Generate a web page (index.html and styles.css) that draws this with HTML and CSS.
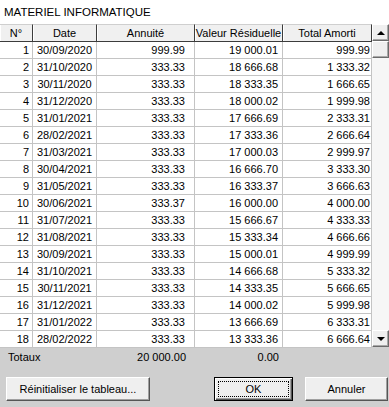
FILE: index.html
```html
<!DOCTYPE html>
<html lang="fr">
<head>
    <meta charset="UTF-8">
    <title>Matériel informatique</title>
    <link rel="stylesheet" href="styles.css">
</head>
<body>
    <div class="title">MATERIEL INFORMATIQUE</div>

    <div class="grid-wrap">
        <table class="grid">
            <thead>
                <tr>
                    <th class="c-no">N°</th>
                    <th class="c-date">Date</th>
                    <th class="c-ann">Annuité</th>
                    <th class="c-val">Valeur Résiduelle</th>
                    <th class="c-tot">Total Amorti</th>
                </tr>
            </thead>
            <tbody>
                <tr><td class="c-no">1</td><td class="c-date">30/09/2020</td><td class="c-ann">999.99</td><td class="c-val">19 000.01</td><td class="c-tot">999.99</td></tr>
                <tr><td class="c-no">2</td><td class="c-date">31/10/2020</td><td class="c-ann">333.33</td><td class="c-val">18 666.68</td><td class="c-tot">1 333.32</td></tr>
                <tr><td class="c-no">3</td><td class="c-date">30/11/2020</td><td class="c-ann">333.33</td><td class="c-val">18 333.35</td><td class="c-tot">1 666.65</td></tr>
                <tr><td class="c-no">4</td><td class="c-date">31/12/2020</td><td class="c-ann">333.33</td><td class="c-val">18 000.02</td><td class="c-tot">1 999.98</td></tr>
                <tr><td class="c-no">5</td><td class="c-date">31/01/2021</td><td class="c-ann">333.33</td><td class="c-val">17 666.69</td><td class="c-tot">2 333.31</td></tr>
                <tr><td class="c-no">6</td><td class="c-date">28/02/2021</td><td class="c-ann">333.33</td><td class="c-val">17 333.36</td><td class="c-tot">2 666.64</td></tr>
                <tr><td class="c-no">7</td><td class="c-date">31/03/2021</td><td class="c-ann">333.33</td><td class="c-val">17 000.03</td><td class="c-tot">2 999.97</td></tr>
                <tr><td class="c-no">8</td><td class="c-date">30/04/2021</td><td class="c-ann">333.33</td><td class="c-val">16 666.70</td><td class="c-tot">3 333.30</td></tr>
                <tr><td class="c-no">9</td><td class="c-date">31/05/2021</td><td class="c-ann">333.33</td><td class="c-val">16 333.37</td><td class="c-tot">3 666.63</td></tr>
                <tr><td class="c-no">10</td><td class="c-date">30/06/2021</td><td class="c-ann">333.37</td><td class="c-val">16 000.00</td><td class="c-tot">4 000.00</td></tr>
                <tr><td class="c-no">11</td><td class="c-date">31/07/2021</td><td class="c-ann">333.33</td><td class="c-val">15 666.67</td><td class="c-tot">4 333.33</td></tr>
                <tr><td class="c-no">12</td><td class="c-date">31/08/2021</td><td class="c-ann">333.33</td><td class="c-val">15 333.34</td><td class="c-tot">4 666.66</td></tr>
                <tr><td class="c-no">13</td><td class="c-date">30/09/2021</td><td class="c-ann">333.33</td><td class="c-val">15 000.01</td><td class="c-tot">4 999.99</td></tr>
                <tr><td class="c-no">14</td><td class="c-date">31/10/2021</td><td class="c-ann">333.33</td><td class="c-val">14 666.68</td><td class="c-tot">5 333.32</td></tr>
                <tr><td class="c-no">15</td><td class="c-date">30/11/2021</td><td class="c-ann">333.33</td><td class="c-val">14 333.35</td><td class="c-tot">5 666.65</td></tr>
                <tr><td class="c-no">16</td><td class="c-date">31/12/2021</td><td class="c-ann">333.33</td><td class="c-val">14 000.02</td><td class="c-tot">5 999.98</td></tr>
                <tr><td class="c-no">17</td><td class="c-date">31/01/2022</td><td class="c-ann">333.33</td><td class="c-val">13 666.69</td><td class="c-tot">6 333.31</td></tr>
                <tr><td class="c-no">18</td><td class="c-date">28/02/2022</td><td class="c-ann">333.33</td><td class="c-val">13 333.36</td><td class="c-tot">6 666.64</td></tr>
            </tbody>
        </table>

        <div class="vscroll">
            <div class="sb-btn"><span class="arrow-up"></span></div>
            <div class="sb-thumb"></div>
            <div class="sb-track"></div>
            <div class="sb-btn"><span class="arrow-down"></span></div>
        </div>
    </div>

    <div class="footer">
        <div class="totals">
            <span class="tot-label">Totaux</span>
            <span class="tot-ann">20 000.00</span>
            <span class="tot-val">0.00</span>
        </div>
        <div class="actions">
            <button class="btn btn-reset">Réinitialiser le tableau...</button>
            <button class="btn btn-ok">OK</button>
            <button class="btn btn-cancel">Annuler</button>
        </div>
    </div>
</body>
</html>
```

FILE: styles.css
```css
body {
    margin: 0;
    width: 389px;
    height: 407px;
    background: #fff;
    font-family: "Liberation Sans", Arial, sans-serif;
    font-size: 11px;
    color: #000;
    overflow: hidden;
}

.title {
    height: 24px;
    padding-left: 4px;
    box-sizing: border-box;
    padding-top: 6px;
    font-size: 11.5px;
    line-height: 13px;
}

/* grid + scrollbar */
.grid-wrap {
    display: flex;
    height: 323px;
}
.grid {
    width: 372px;
    table-layout: fixed;
    border-collapse: separate;
    border-spacing: 0;
}
.grid th,
.grid td {
    box-sizing: border-box;
    padding: 0;
    white-space: nowrap;
    overflow: hidden;
}
.grid th {
    height: 18px;
    background: #f0f0f0;
    font-weight: normal;
    text-align: center;
    border-top: 1px solid #cfcfcf;
    border-right: 1px solid #3c3c3c;
    border-bottom: 1px solid #3c3c3c;
    box-shadow: inset 1px 0 #fff;
}
.grid td {
    height: 17px;
    line-height: 16px;
    border-right: 1px solid #c4c4c4;
    border-bottom: 1px solid #c4c4c4;
    text-align: right;
}
.c-no { width: 33px; }
.c-date { width: 64px; }
.c-ann { width: 98px; }
.c-val { width: 88px; }
.c-tot { width: 89px; }
td.c-no { padding-right: 3px; }
td.c-date { text-align: center; }
td.c-ann { padding-right: 9px; }
td.c-val { padding-right: 4px; }
td.c-tot { padding-right: 1px; }

.vscroll {
    width: 17px;
    display: flex;
    flex-direction: column;
    background: #f6f6f6;
}
.sb-btn,
.sb-thumb {
    height: 17px;
    box-sizing: border-box;
    background: #efefef;
    border: 1px solid;
    border-color: #fff #6a6a6a #6a6a6a #fff;
    box-shadow: inset -1px -1px #a8a8a8;
    display: flex;
    align-items: center;
    justify-content: center;
}
.sb-track {
    flex: 1;
}
.arrow-up,
.arrow-down {
    width: 0;
    height: 0;
    border-left: 4px solid transparent;
    border-right: 4px solid transparent;
}
.arrow-up { border-bottom: 4px solid #000; }
.arrow-down { border-top: 4px solid #000; }

/* footer */
.footer {
    background: #cfcfcf;
    height: 60px;
}
.totals {
    display: flex;
    height: 20px;
    line-height: 20px;
}
.tot-label {
    width: 97px;
    box-sizing: border-box;
    padding-left: 8px;
}
.tot-ann {
    width: 98px;
    box-sizing: border-box;
    padding-right: 9px;
    text-align: right;
}
.tot-val {
    width: 88px;
    box-sizing: border-box;
    padding-right: 4px;
    text-align: right;
}

.actions {
    display: flex;
    margin-top: 10px;
}
.btn {
    position: relative;
    height: 24px;
    padding: 0;
    box-sizing: border-box;
    font-family: inherit;
    font-size: 11px;
    color: #000;
    background: #efefef;
    border: 1px solid;
    border-color: #fff #555 #555 #fff;
    box-shadow: inset -1px -1px #a0a0a0;
}
.btn-reset {
    margin-left: 6px;
    width: 144px;
}
.btn-ok {
    margin-left: 64px;
    width: 79px;
    border-color: #000;
    box-shadow: inset 1px 1px #fff, inset -1px -1px #555, inset -2px -2px #a0a0a0;
}
.btn-ok::after {
    content: "";
    position: absolute;
    top: 3px;
    left: 3px;
    right: 3px;
    bottom: 3px;
    border: 1px dotted #000;
}
.btn-cancel {
    margin-left: 12px;
    width: 83px;
}
```
